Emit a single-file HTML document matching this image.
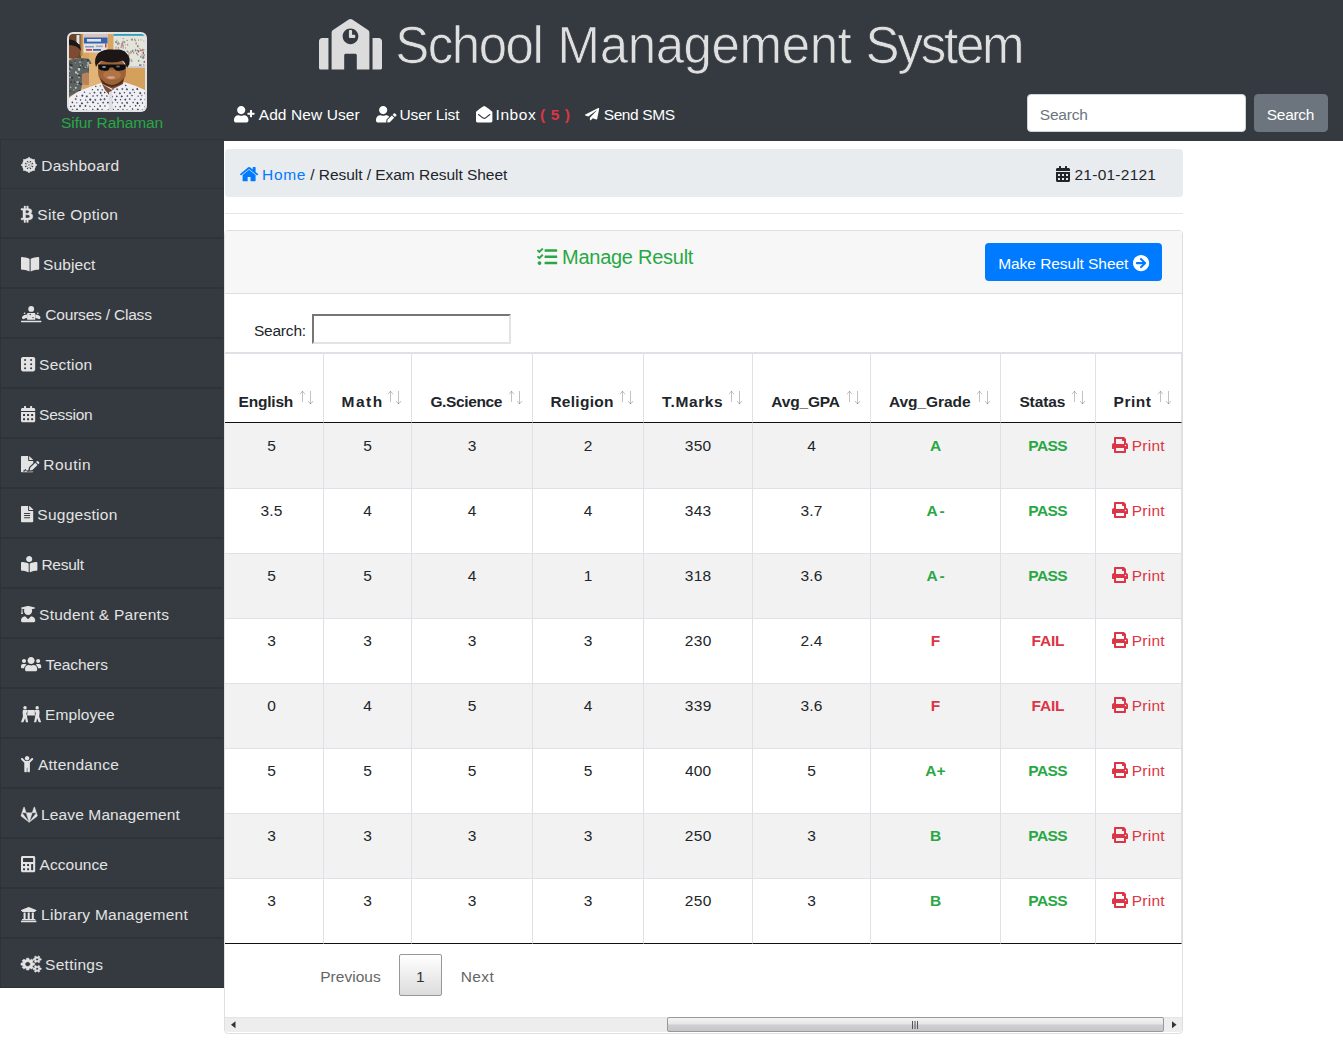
<!DOCTYPE html>
<html lang="en"><head><meta charset="utf-8"><title>School Management System</title>
<style>
html,body{margin:0;padding:0}
body{width:1343px;height:1044px;position:relative;overflow:hidden;background:#fff;font-family:"Liberation Sans",sans-serif;font-size:15.5px;color:#212529}
.t{position:absolute;white-space:nowrap;line-height:1;margin:0;font-weight:400}
svg.i{position:absolute;fill:currentColor;overflow:visible}
a{text-decoration:none;color:inherit}
#top{position:absolute;left:0;top:0;width:1343px;height:141px;background:#343a40;color:#fff}
#side{position:absolute;left:0;top:139px;width:224px;height:849px;background:#343a40;margin:0;padding:0;list-style:none;color:#e3e3e3}
#side li{position:absolute;left:0;width:222px;height:48px;border:1px solid #2e3338;border-right:0}
#side li:nth-child(2){border-top:0}
#avatar{position:absolute;left:67px;top:32px;width:80px;height:80px;border-radius:6px;overflow:hidden;background:#e2e2e2}
#avatar svg{position:absolute;left:2px;top:2px;width:76px;height:76px;border-radius:4px}
#q{position:absolute;left:1027px;top:94px;width:219px;height:38px;box-sizing:border-box;border:1px solid #ced4da;border-radius:4px;background:#fff}
#qb{position:absolute;left:1254px;top:94px;width:73.5px;height:38px;box-sizing:border-box;border:1px solid #6c757d;border-radius:4px;background:#6c757d}
#crumb{position:absolute;left:225px;top:149px;width:958px;height:48px;background:#e9ecef;border-radius:4px}
#hr{position:absolute;left:225px;top:213px;width:958px;height:1px;background:#e6e6e6}
#card{position:absolute;left:224px;top:230px;width:957px;height:802px;border:1px solid #dfdfdf;border-radius:4px;background:#fff}
#chead{position:absolute;left:0;top:0;width:957px;height:62px;background:#f7f7f7;border-bottom:1px solid #dfdfdf;border-radius:3px 3px 0 0}
#mk{position:absolute;left:985px;top:243px;width:177px;height:38px;background:#007bff;border-radius:4px}
#sin{position:absolute;left:312px;top:314px;width:199px;height:29.5px;box-sizing:border-box;border:2px solid;border-color:#767676 #e3e3e3 #e3e3e3 #767676;background:#fff}

#tbl{position:absolute;left:225px;top:352px;width:957px;border-collapse:separate;border-spacing:0;table-layout:fixed}
#tbl th,#tbl td{position:relative;padding:0;box-sizing:border-box;border-right:1px solid #dee2e6;text-align:center;font-weight:400}
#tbl th{height:71px;border-top:2px solid #dee2e6;border-bottom:1px solid #111}
#tbl td{height:65px;border-bottom:1px solid #dee2e6;vertical-align:top;line-height:1}
#tbl tr:first-child td{height:66px}
#tbl tr.o td{background:#f2f2f2}
#tbl tr:last-child td{border-bottom-color:#111}
#tbl td span.v{display:inline-block;margin-top:14px}
#tbl tr:first-child td span.v{margin-top:15px}
#tbl td:first-child{padding-right:5px}
#tbl .g{color:#28a745;font-weight:700}
#tbl .r{color:#dc3545;font-weight:700}
#tbl .ar{opacity:.28}
#tbl td a{color:#dc3545}
.pg{color:#666}
#p1{position:absolute;left:399px;top:954px;width:42.5px;height:42px;box-sizing:border-box;border:1px solid #979797;border-radius:2px;background:linear-gradient(to bottom,#fff 0%,#dcdcdc 100%)}
#sb{position:absolute;left:225px;top:1017px;width:957px;height:15px;background:#ededed;border-top:1px solid #e4e4e4;box-sizing:border-box;border-radius:0 0 3px 3px}
#sbt{position:absolute;left:442px;top:-1px;width:497px;height:15px;box-sizing:border-box;border:1px solid #999;border-radius:2px;background:linear-gradient(to bottom,#f4f4f4 0%,#e6e6e6 45%,#cfcfd2 55%,#c6c6ca 100%)}
</style></head><body>
<header id="top">
<div id="avatar"><svg viewBox="0 0 76 76" preserveAspectRatio="none"><defs><filter id="bl" x="-5%" y="-5%" width="110%" height="110%"><feGaussianBlur stdDeviation="0.55"/></filter><clipPath id="cp"><rect width="76" height="76" rx="3"/></clipPath></defs><g clip-path="url(#cp)"><g filter="url(#bl)"><rect x="-2" y="-2" width="80" height="80" fill="#d8a564"/><rect x="20" y="18" width="28" height="34" fill="#e0b070"/><rect x="56" y="33" width="22" height="25" fill="#d59f5c"/><rect x="-2" y="-2" width="14" height="26" fill="#6a452c"/><rect x="7.500" y="1" width="3" height="9" fill="#dfe6e6"/><rect x="11.500" y="-2" width="2" height="24" fill="#b98a4e"/><rect x="14.500" y="0" width="24" height="18.500" fill="#e6e3dc"/><rect x="14.500" y="0" width="24" height="4" fill="#d9c3bd"/><rect x="15" y="3.500" width="23.500" height="6" fill="#3563ae"/><rect x="18" y="5" width="14" height="2.600" fill="#dfe6f2"/><rect x="16" y="12" width="9" height="1.500" fill="#7f9cc9"/><rect x="27" y="11.500" width="7" height="1.600" fill="#9aa9c4"/><rect x="36" y="9.500" width="1.500" height="4" fill="#c2414c"/><rect x="17" y="15" width="6" height="1.800" fill="#c9464f"/><rect x="24" y="15" width="8" height="1.800" fill="#3f62a8"/><rect x="44.500" y="0" width="32" height="33.500" fill="#e3e4dc"/><rect x="44.500" y="0" width="32" height="1.800" fill="#2c9db8"/><rect x="55.4" y="7.2" width="0.7" height="2.1" fill="#7d8078"/><rect x="48.7" y="19.3" width="0.9" height="0.9" fill="#c7907a"/><rect x="58.1" y="9.7" width="1.1" height="2.1" fill="#c7907a"/><rect x="49.6" y="9.3" width="1.3" height="0.9" fill="#7d8078"/><rect x="63.0" y="4.4" width="0.7" height="2.2" fill="#b65a50"/><rect x="54.4" y="7.0" width="1.3" height="1.7" fill="#8b8f86"/><rect x="65.8" y="5.9" width="1.4" height="1.4" fill="#c7907a"/><rect x="61.9" y="4.8" width="1.3" height="1.6" fill="#8b8f86"/><rect x="61.4" y="24.8" width="1.3" height="1.5" fill="#a9aca2"/><rect x="54.7" y="25.2" width="1.5" height="0.9" fill="#7d8078"/><rect x="54.7" y="16.9" width="1.5" height="1.3" fill="#6f8a96"/><rect x="74.4" y="6.3" width="0.8" height="1.3" fill="#a9aca2"/><rect x="73.1" y="14.8" width="0.7" height="1.7" fill="#7d8078"/><rect x="68.9" y="25.9" width="1.4" height="1.8" fill="#6f8a96"/><rect x="62.8" y="15.8" width="1.7" height="1.6" fill="#8b8f86"/><rect x="65.3" y="4.7" width="1.0" height="1.7" fill="#7d8078"/><rect x="65.8" y="15.5" width="1.1" height="1.9" fill="#7d8078"/><rect x="46.7" y="15.9" width="1.3" height="1.6" fill="#b65a50"/><rect x="52.3" y="11.0" width="0.9" height="1.4" fill="#7d8078"/><rect x="71.3" y="5.3" width="1.1" height="1.2" fill="#a9aca2"/><rect x="50.0" y="15.1" width="0.9" height="1.5" fill="#c7907a"/><rect x="56.4" y="27.8" width="0.8" height="1.1" fill="#b65a50"/><rect x="52.7" y="9.5" width="1.6" height="1.1" fill="#a9aca2"/><rect x="54.2" y="7.1" width="1.0" height="1.7" fill="#c7907a"/><rect x="73.6" y="22.3" width="1.7" height="1.8" fill="#c7907a"/><rect x="67.5" y="15.8" width="1.6" height="1.4" fill="#7d8078"/><rect x="57.6" y="5.9" width="1.1" height="1.1" fill="#7d8078"/><rect x="74.6" y="15.3" width="1.0" height="0.9" fill="#8b8f86"/><rect x="46.0" y="7.2" width="1.7" height="1.8" fill="#8b8f86"/><rect x="48.0" y="8.8" width="0.8" height="1.2" fill="#a9aca2"/><rect x="56.1" y="13.2" width="0.7" height="1.6" fill="#8b8f86"/><rect x="74.4" y="16.5" width="0.7" height="1.0" fill="#6f8a96"/><rect x="55.9" y="10.4" width="0.8" height="0.8" fill="#7d8078"/><rect x="73.6" y="17.8" width="1.4" height="2.3" fill="#b65a50"/><rect x="68.0" y="11.3" width="1.6" height="1.9" fill="#7d8078"/><rect x="53.6" y="13.3" width="1.0" height="1.2" fill="#b65a50"/><rect x="61.7" y="17.1" width="0.9" height="2.1" fill="#7d8078"/><rect x="74.6" y="26.9" width="1.6" height="2.0" fill="#b65a50"/><rect x="52.6" y="17.5" width="1.5" height="2.4" fill="#6f8a96"/><rect x="68.9" y="16.2" width="1.4" height="2.3" fill="#b65a50"/><rect x="59.0" y="29.2" width="1.7" height="1.4" fill="#6f8a96"/><rect x="52.4" y="9.4" width="1.0" height="1.6" fill="#b65a50"/><rect x="74.6" y="20.1" width="1.2" height="1.8" fill="#8b8f86"/><rect x="69.2" y="5.4" width="0.7" height="1.4" fill="#7d8078"/><rect x="66.6" y="8.6" width="1.1" height="1.8" fill="#b65a50"/><rect x="48.5" y="29.5" width="1.1" height="1.4" fill="#7d8078"/><rect x="73.5" y="23.3" width="1.8" height="0.8" fill="#b65a50"/><rect x="63.1" y="16.0" width="0.8" height="2.1" fill="#7d8078"/><rect x="74.4" y="21.4" width="0.8" height="1.7" fill="#6f8a96"/><rect x="46.6" y="25.4" width="1.4" height="1.6" fill="#7d8078"/><rect x="73.1" y="15.1" width="1.6" height="1.1" fill="#b65a50"/><rect x="53.3" y="11.2" width="1.5" height="1.3" fill="#b65a50"/><rect x="61.8" y="26.4" width="1.7" height="1.4" fill="#8b8f86"/><rect x="59.3" y="19.3" width="1.1" height="2.3" fill="#c7907a"/><rect x="60.5" y="17.9" width="1.2" height="2.2" fill="#c7907a"/><rect x="68.5" y="20.0" width="0.8" height="1.6" fill="#b65a50"/><rect x="67.0" y="18.6" width="1.4" height="1.6" fill="#6f8a96"/><rect x="60.0" y="24.7" width="0.7" height="1.1" fill="#c7907a"/><rect x="47.2" y="5.7" width="1.3" height="2.0" fill="#a9aca2"/><rect x="72.5" y="15.4" width="1.8" height="1.8" fill="#c7907a"/><rect x="51.8" y="10.8" width="1.2" height="1.6" fill="#c7907a"/><rect x="73.3" y="22.6" width="1.7" height="2.2" fill="#6f8a96"/><rect x="51.9" y="15.5" width="0.7" height="1.5" fill="#a9aca2"/><rect x="48.1" y="9.7" width="0.9" height="1.3" fill="#8b8f86"/><rect x="49.5" y="24.8" width="1.4" height="1.4" fill="#7d8078"/><rect x="53.3" y="6.8" width="0.9" height="2.3" fill="#a9aca2"/><rect x="57.5" y="16.6" width="1.6" height="1.1" fill="#7d8078"/><rect x="58.5" y="17.4" width="1.1" height="1.4" fill="#6f8a96"/><rect x="48.7" y="13.2" width="1.3" height="1.5" fill="#6f8a96"/><rect x="46.5" y="12.3" width="1.0" height="2.3" fill="#c7907a"/><rect x="49.3" y="28.7" width="1.8" height="1.0" fill="#b65a50"/><rect x="53.7" y="4.1" width="0.9" height="1.0" fill="#b65a50"/><rect x="58.2" y="28.5" width="1.1" height="1.7" fill="#6f8a96"/><rect x="60.9" y="16.8" width="0.7" height="0.9" fill="#6f8a96"/><rect x="66.0" y="14.9" width="0.9" height="0.8" fill="#8b8f86"/><rect x="48.6" y="10.3" width="1.6" height="0.9" fill="#c7907a"/><rect x="71.0" y="15.7" width="1.8" height="1.5" fill="#6f8a96"/><rect x="72.5" y="20.4" width="1.2" height="1.2" fill="#8b8f86"/><rect x="49.2" y="7.5" width="0.8" height="2.3" fill="#8b8f86"/><rect x="64.2" y="17.9" width="0.9" height="1.6" fill="#b65a50"/><rect x="51.2" y="12.7" width="1.8" height="0.9" fill="#8b8f86"/><rect x="46.5" y="17.2" width="1.2" height="1.2" fill="#b65a50"/><rect x="59.0" y="21.4" width="1.1" height="1.6" fill="#7d8078"/><rect x="70.2" y="14.0" width="1.0" height="1.1" fill="#c7907a"/><rect x="52.7" y="8.6" width="1.5" height="1.0" fill="#7d8078"/><rect x="74.7" y="30.5" width="0.6" height="1.8" fill="#b65a50"/><rect x="71.5" y="15.1" width="0.7" height="2.1" fill="#8b8f86"/><rect x="71.2" y="21.8" width="1.3" height="1.9" fill="#6f8a96"/><rect x="47.3" y="8.2" width="1.1" height="1.2" fill="#6f8a96"/><rect x="73.9" y="30.2" width="1.0" height="0.9" fill="#c7907a"/><rect x="44.500" y="32" width="32" height="1.500" fill="#c9ccd0"/><rect x="70" y="30.500" width="2.500" height="1.200" fill="#3b5fb0"/><ellipse cx="4" cy="16" rx="7" ry="9" fill="#7b4c33"/><path d="M-2 6 Q5 4 11 12 L12 17 Q8 10 -2 11z" fill="#1c1715"/><path d="M-2 27 Q8 22 20 25 Q24 30 23 38 L14 44 L12 56 L-2 64z" fill="#5d6263"/><rect x="18.4" y="32.4" width="0.8" height="1.4" fill="#c9cdcd"/><rect x="9.4" y="42.1" width="1.2" height="2.0" fill="#c9cdcd"/><rect x="1.0" y="52.8" width="1.4" height="0.9" fill="#c9cdcd"/><rect x="-0.5" y="35.3" width="0.9" height="2.2" fill="#c9cdcd"/><rect x="17.8" y="30.3" width="1.9" height="1.9" fill="#a9aeae"/><rect x="9.9" y="34.7" width="0.9" height="2.1" fill="#c9cdcd"/><rect x="2.1" y="42.8" width="2.0" height="1.7" fill="#2f3436"/><rect x="14.3" y="32.8" width="0.9" height="1.8" fill="#2f3436"/><rect x="20.1" y="37.8" width="1.6" height="1.7" fill="#a9aeae"/><rect x="12.8" y="48.1" width="1.2" height="1.5" fill="#a9aeae"/><rect x="0.5" y="56.7" width="1.8" height="0.9" fill="#2f3436"/><rect x="15.2" y="33.6" width="2.1" height="1.2" fill="#2f3436"/><rect x="15.6" y="32.8" width="1.5" height="1.4" fill="#a9aeae"/><rect x="9.5" y="48.2" width="1.7" height="1.8" fill="#2f3436"/><rect x="0.7" y="30.0" width="1.8" height="1.8" fill="#3c4244"/><rect x="12.7" y="29.5" width="0.9" height="1.2" fill="#a9aeae"/><rect x="13.8" y="48.5" width="1.2" height="1.6" fill="#a9aeae"/><rect x="9.2" y="40.9" width="2.3" height="1.6" fill="#2f3436"/><rect x="5.9" y="27.9" width="0.8" height="1.5" fill="#a9aeae"/><rect x="8.9" y="34.1" width="2.2" height="2.2" fill="#c9cdcd"/><rect x="0.6" y="28.1" width="2.2" height="1.0" fill="#3c4244"/><rect x="4.1" y="55.5" width="1.4" height="1.0" fill="#a9aeae"/><rect x="7.9" y="49.7" width="1.3" height="1.3" fill="#a9aeae"/><rect x="17.5" y="25.1" width="2.1" height="1.0" fill="#3c4244"/><rect x="18.8" y="34.9" width="0.9" height="1.4" fill="#3c4244"/><rect x="18.1" y="27.6" width="1.9" height="2.1" fill="#a9aeae"/><rect x="5.2" y="26.8" width="1.8" height="1.0" fill="#3c4244"/><rect x="20.4" y="39.8" width="1.1" height="1.4" fill="#3c4244"/><rect x="11.1" y="49.5" width="2.2" height="1.4" fill="#2f3436"/><rect x="12.5" y="29.7" width="1.5" height="2.2" fill="#3c4244"/><rect x="11.1" y="30.8" width="1.3" height="1.2" fill="#a9aeae"/><rect x="4.7" y="47.3" width="1.5" height="1.8" fill="#3c4244"/><rect x="1.6" y="46.9" width="1.1" height="2.2" fill="#2f3436"/><rect x="9.9" y="32.5" width="2.3" height="1.5" fill="#3c4244"/><rect x="2.1" y="31.5" width="1.1" height="1.6" fill="#2f3436"/><rect x="6.0" y="37.5" width="2.1" height="1.9" fill="#c9cdcd"/><rect x="8.1" y="39.1" width="1.4" height="1.3" fill="#c9cdcd"/><rect x="0.4" y="34.4" width="1.0" height="1.6" fill="#3c4244"/><rect x="12.9" y="54.3" width="0.9" height="2.1" fill="#c9cdcd"/><rect x="7.5" y="47.0" width="2.2" height="2.1" fill="#a9aeae"/><rect x="18.2" y="25.7" width="1.4" height="1.9" fill="#2f3436"/><rect x="9.8" y="27.5" width="2.3" height="1.2" fill="#a9aeae"/><rect x="1.4" y="30.2" width="2.2" height="1.9" fill="#2f3436"/><rect x="13.2" y="51.0" width="0.9" height="2.0" fill="#a9aeae"/><rect x="-1.0" y="29.3" width="1.8" height="1.3" fill="#2f3436"/><rect x="1.8" y="33.6" width="1.8" height="1.0" fill="#a9aeae"/><rect x="0.5" y="42.8" width="1.4" height="1.1" fill="#c9cdcd"/><rect x="12.2" y="25.4" width="2.3" height="1.2" fill="#3c4244"/><rect x="6.0" y="53.5" width="1.5" height="1.2" fill="#c9cdcd"/><rect x="4.4" y="57.7" width="0.9" height="1.1" fill="#3c4244"/><rect x="0.8" y="32.7" width="2.2" height="1.1" fill="#a9aeae"/><rect x="-0.2" y="36.5" width="1.3" height="1.4" fill="#a9aeae"/><rect x="-0.9" y="34.9" width="1.1" height="2.3" fill="#2f3436"/><rect x="5.9" y="52.9" width="1.5" height="1.2" fill="#c9cdcd"/><rect x="18.6" y="28.7" width="1.7" height="2.1" fill="#a9aeae"/><rect x="9.7" y="56.0" width="2.2" height="1.0" fill="#2f3436"/><path d="M13 40 Q19 37 22 40 L22 50 Q18 52 13 50z" fill="#b8835a"/><rect x="20" y="30" width="10" height="24" fill="#e3b478"/><path d="M-2 66 Q6 58 18 54 L32 49 L44 54 L55 48 Q66 51 78 57 L78 78 L-2 78z" fill="#f0eff4"/><path d="M26.8 51.5l0.9 1.0l-0.9 0.8l-0.8 -0.9z" fill="#2f3546"/><path d="M31.2 51.1l0.8 0.9l-0.8 0.7l-0.7 -0.8z" fill="#596078"/><path d="M56.7 50.4l1.0 1.1l-1.0 0.9l-0.9 -1.0z" fill="#454b5e"/><path d="M23.4 54.7l0.9 1.1l-0.9 0.8l-0.8 -0.9z" fill="#3a4152"/><path d="M28.9 54.8l1.0 1.1l-1.0 0.9l-0.9 -1.0z" fill="#2f3546"/><path d="M33.2 54.9l1.0 1.1l-1.0 0.8l-0.8 -1.0z" fill="#3a4152"/><path d="M38.8 54.1l1.0 1.1l-1.0 0.9l-0.9 -1.0z" fill="#2f3546"/><path d="M43.9 54.6l0.8 0.9l-0.8 0.7l-0.7 -0.8z" fill="#3a4152"/><path d="M48.1 53.9l1.3 1.5l-1.3 1.2l-1.2 -1.3z" fill="#596078"/><path d="M53.3 53.7l1.2 1.4l-1.2 1.1l-1.1 -1.2z" fill="#596078"/><path d="M57.9 54.0l1.2 1.4l-1.2 1.1l-1.1 -1.2z" fill="#3a4152"/><path d="M63.9 54.5l1.1 1.3l-1.1 1.0l-1.0 -1.1z" fill="#454b5e"/><path d="M68.2 53.8l1.2 1.4l-1.2 1.1l-1.1 -1.2z" fill="#2f3546"/><path d="M15.4 57.3l0.9 1.0l-0.9 0.8l-0.8 -0.9z" fill="#3a4152"/><path d="M20.9 58.4l0.9 1.0l-0.9 0.8l-0.8 -0.9z" fill="#596078"/><path d="M25.4 57.4l1.2 1.3l-1.2 1.1l-1.1 -1.2z" fill="#454b5e"/><path d="M31.6 57.6l1.2 1.4l-1.2 1.1l-1.1 -1.2z" fill="#3a4152"/><path d="M35.7 57.4l1.0 1.1l-1.0 0.9l-0.9 -1.0z" fill="#2f3546"/><path d="M41.4 57.4l0.9 1.0l-0.9 0.8l-0.8 -0.9z" fill="#454b5e"/><path d="M45.6 57.4l1.0 1.1l-1.0 0.9l-0.9 -1.0z" fill="#454b5e"/><path d="M50.8 58.1l1.2 1.3l-1.2 1.0l-1.0 -1.2z" fill="#454b5e"/><path d="M55.4 57.8l0.9 1.0l-0.9 0.8l-0.8 -0.9z" fill="#3a4152"/><path d="M61.0 57.7l1.3 1.4l-1.3 1.2l-1.2 -1.3z" fill="#596078"/><path d="M65.3 57.6l0.8 0.9l-0.8 0.7l-0.7 -0.8z" fill="#3a4152"/><path d="M71.2 57.7l1.3 1.5l-1.3 1.2l-1.2 -1.3z" fill="#454b5e"/><path d="M75.8 58.0l1.1 1.3l-1.1 1.0l-1.0 -1.1z" fill="#596078"/><path d="M7.7 61.3l0.9 1.0l-0.9 0.8l-0.8 -0.9z" fill="#2f3546"/><path d="M13.3 60.3l1.3 1.5l-1.3 1.2l-1.2 -1.3z" fill="#454b5e"/><path d="M17.8 61.1l1.2 1.4l-1.2 1.1l-1.1 -1.2z" fill="#454b5e"/><path d="M24.0 61.1l0.9 1.0l-0.9 0.8l-0.8 -0.9z" fill="#2f3546"/><path d="M28.2 60.6l1.1 1.2l-1.1 1.0l-1.0 -1.1z" fill="#596078"/><path d="M32.8 60.4l1.2 1.3l-1.2 1.0l-1.0 -1.2z" fill="#596078"/><path d="M37.9 61.1l1.0 1.1l-1.0 0.9l-0.9 -1.0z" fill="#454b5e"/><path d="M43.1 61.6l1.0 1.2l-1.0 0.9l-0.9 -1.0z" fill="#2f3546"/><path d="M47.8 61.3l1.0 1.1l-1.0 0.9l-0.9 -1.0z" fill="#2f3546"/><path d="M52.7 61.2l1.2 1.3l-1.2 1.0l-1.0 -1.2z" fill="#2f3546"/><path d="M58.3 60.9l1.0 1.2l-1.0 0.9l-0.9 -1.0z" fill="#3a4152"/><path d="M63.0 60.6l1.0 1.1l-1.0 0.9l-0.9 -1.0z" fill="#3a4152"/><path d="M69.1 61.2l0.9 1.0l-0.9 0.8l-0.8 -0.9z" fill="#454b5e"/><path d="M72.8 60.8l0.9 1.0l-0.9 0.8l-0.8 -0.9z" fill="#596078"/><path d="M78.7 61.1l0.9 1.0l-0.9 0.8l-0.8 -0.9z" fill="#454b5e"/><path d="M6.7 63.8l1.2 1.4l-1.2 1.1l-1.1 -1.2z" fill="#596078"/><path d="M11.5 65.0l0.9 1.0l-0.9 0.8l-0.8 -0.9z" fill="#2f3546"/><path d="M16.7 65.1l1.0 1.1l-1.0 0.9l-0.9 -1.0z" fill="#596078"/><path d="M21.2 64.3l1.3 1.4l-1.3 1.2l-1.2 -1.3z" fill="#3a4152"/><path d="M26.2 64.7l1.2 1.3l-1.2 1.0l-1.0 -1.2z" fill="#454b5e"/><path d="M31.6 64.3l1.3 1.4l-1.3 1.1l-1.1 -1.3z" fill="#454b5e"/><path d="M35.5 63.8l1.3 1.5l-1.3 1.2l-1.2 -1.3z" fill="#596078"/><path d="M40.5 64.4l0.9 1.0l-0.9 0.8l-0.8 -0.9z" fill="#454b5e"/><path d="M46.4 64.6l1.3 1.4l-1.3 1.1l-1.1 -1.3z" fill="#3a4152"/><path d="M51.5 64.8l0.9 1.0l-0.9 0.8l-0.8 -0.9z" fill="#2f3546"/><path d="M56.2 64.4l1.2 1.3l-1.2 1.0l-1.0 -1.2z" fill="#2f3546"/><path d="M60.7 64.0l1.2 1.3l-1.2 1.0l-1.0 -1.2z" fill="#596078"/><path d="M65.9 64.6l0.8 0.9l-0.8 0.7l-0.7 -0.8z" fill="#3a4152"/><path d="M71.8 64.2l1.2 1.4l-1.2 1.1l-1.1 -1.2z" fill="#596078"/><path d="M76.4 64.2l1.2 1.4l-1.2 1.1l-1.1 -1.2z" fill="#454b5e"/><path d="M3.3 67.3l1.0 1.2l-1.0 0.9l-0.9 -1.0z" fill="#2f3546"/><path d="M7.8 68.0l0.8 0.9l-0.8 0.7l-0.7 -0.8z" fill="#3a4152"/><path d="M12.9 68.1l1.2 1.4l-1.2 1.1l-1.1 -1.2z" fill="#2f3546"/><path d="M18.5 67.2l1.2 1.3l-1.2 1.0l-1.0 -1.2z" fill="#596078"/><path d="M24.0 66.9l1.3 1.5l-1.3 1.2l-1.2 -1.3z" fill="#3a4152"/><path d="M28.9 68.4l0.9 1.0l-0.9 0.8l-0.8 -0.9z" fill="#454b5e"/><path d="M34.1 67.4l1.2 1.3l-1.2 1.0l-1.0 -1.2z" fill="#454b5e"/><path d="M38.9 67.4l1.1 1.3l-1.1 1.0l-1.0 -1.1z" fill="#2f3546"/><path d="M43.1 67.3l1.3 1.4l-1.3 1.2l-1.2 -1.3z" fill="#2f3546"/><path d="M48.4 67.7l0.9 1.0l-0.9 0.8l-0.8 -0.9z" fill="#596078"/><path d="M53.1 67.9l1.0 1.1l-1.0 0.9l-0.9 -1.0z" fill="#2f3546"/><path d="M58.0 67.6l1.2 1.3l-1.2 1.0l-1.0 -1.2z" fill="#2f3546"/><path d="M64.1 67.6l0.9 1.0l-0.9 0.8l-0.8 -0.9z" fill="#2f3546"/><path d="M68.5 67.7l1.3 1.5l-1.3 1.2l-1.2 -1.3z" fill="#2f3546"/><path d="M73.4 68.0l0.9 1.1l-0.9 0.8l-0.8 -0.9z" fill="#3a4152"/><path d="M78.6 68.4l1.0 1.1l-1.0 0.8l-0.8 -1.0z" fill="#2f3546"/><path d="M1.8 71.4l1.0 1.1l-1.0 0.9l-0.9 -1.0z" fill="#2f3546"/><path d="M5.3 71.0l1.0 1.1l-1.0 0.9l-0.9 -1.0z" fill="#3a4152"/><path d="M11.0 70.8l1.2 1.3l-1.2 1.1l-1.1 -1.2z" fill="#2f3546"/><path d="M16.4 70.8l1.1 1.3l-1.1 1.0l-1.0 -1.1z" fill="#2f3546"/><path d="M20.9 71.4l0.9 1.0l-0.9 0.8l-0.8 -0.9z" fill="#3a4152"/><path d="M25.6 71.7l0.8 0.9l-0.8 0.7l-0.7 -0.8z" fill="#3a4152"/><path d="M31.1 70.9l1.1 1.2l-1.1 1.0l-1.0 -1.1z" fill="#2f3546"/><path d="M35.9 71.1l0.9 1.0l-0.9 0.8l-0.8 -0.9z" fill="#454b5e"/><path d="M41.2 71.5l0.8 0.9l-0.8 0.7l-0.7 -0.8z" fill="#454b5e"/><path d="M46.5 71.7l0.9 1.0l-0.9 0.8l-0.8 -0.9z" fill="#596078"/><path d="M51.2 71.7l1.0 1.1l-1.0 0.9l-0.9 -1.0z" fill="#2f3546"/><path d="M55.6 70.6l1.1 1.3l-1.1 1.0l-1.0 -1.1z" fill="#2f3546"/><path d="M61.1 71.5l0.9 1.0l-0.9 0.8l-0.8 -0.9z" fill="#596078"/><path d="M66.6 70.7l1.0 1.1l-1.0 0.9l-0.9 -1.0z" fill="#3a4152"/><path d="M70.6 71.0l0.8 0.9l-0.8 0.7l-0.7 -0.8z" fill="#3a4152"/><path d="M76.1 71.8l1.0 1.1l-1.0 0.9l-0.9 -1.0z" fill="#454b5e"/><path d="M3.5 74.6l1.2 1.4l-1.2 1.1l-1.1 -1.2z" fill="#596078"/><path d="M8.0 74.3l1.1 1.3l-1.1 1.0l-1.0 -1.1z" fill="#2f3546"/><path d="M14.3 74.7l1.2 1.3l-1.2 1.1l-1.1 -1.2z" fill="#596078"/><path d="M17.7 75.3l0.9 0.9l-0.9 0.8l-0.8 -0.9z" fill="#596078"/><path d="M23.7 74.4l1.0 1.1l-1.0 0.8l-0.8 -1.0z" fill="#3a4152"/><path d="M28.7 74.0l1.2 1.3l-1.2 1.1l-1.1 -1.2z" fill="#2f3546"/><path d="M33.1 74.6l1.2 1.3l-1.2 1.0l-1.0 -1.2z" fill="#596078"/><path d="M39.2 75.1l1.2 1.3l-1.2 1.0l-1.0 -1.2z" fill="#2f3546"/><path d="M44.2 74.5l0.9 1.0l-0.9 0.8l-0.8 -0.9z" fill="#3a4152"/><path d="M49.1 74.7l1.3 1.5l-1.3 1.2l-1.2 -1.3z" fill="#454b5e"/><path d="M53.9 74.5l1.0 1.1l-1.0 0.9l-0.9 -1.0z" fill="#596078"/><path d="M58.1 75.1l1.1 1.2l-1.1 0.9l-0.9 -1.1z" fill="#596078"/><path d="M63.5 74.0l1.0 1.2l-1.0 0.9l-0.9 -1.0z" fill="#3a4152"/><path d="M68.9 74.5l1.2 1.4l-1.2 1.1l-1.1 -1.2z" fill="#2f3546"/><path d="M73.3 74.9l0.9 1.0l-0.9 0.8l-0.8 -0.9z" fill="#454b5e"/><path d="M77.7 74.2l1.0 1.1l-1.0 0.9l-0.9 -1.0z" fill="#454b5e"/><path d="M0.4 77.7l0.9 1.0l-0.9 0.8l-0.8 -0.9z" fill="#3a4152"/><path d="M6.2 77.3l1.2 1.3l-1.2 1.1l-1.1 -1.2z" fill="#3a4152"/><path d="M10.3 78.3l0.9 1.0l-0.9 0.8l-0.8 -0.9z" fill="#2f3546"/><path d="M16.7 77.8l1.3 1.4l-1.3 1.1l-1.1 -1.3z" fill="#3a4152"/><path d="M21.4 78.5l0.9 1.0l-0.9 0.8l-0.8 -0.9z" fill="#596078"/><path d="M25.5 77.3l1.3 1.5l-1.3 1.2l-1.2 -1.3z" fill="#3a4152"/><path d="M31.7 78.1l1.3 1.4l-1.3 1.1l-1.1 -1.3z" fill="#3a4152"/><path d="M36.2 78.0l0.9 1.0l-0.9 0.8l-0.8 -0.9z" fill="#3a4152"/><path d="M41.5 78.3l1.0 1.1l-1.0 0.9l-0.9 -1.0z" fill="#2f3546"/><path d="M45.9 77.2l1.3 1.5l-1.3 1.2l-1.2 -1.3z" fill="#2f3546"/><path d="M50.3 78.2l1.2 1.4l-1.2 1.1l-1.1 -1.2z" fill="#2f3546"/><path d="M56.2 77.9l1.1 1.3l-1.1 1.0l-1.0 -1.1z" fill="#2f3546"/><path d="M60.2 77.9l1.1 1.2l-1.1 1.0l-1.0 -1.1z" fill="#596078"/><path d="M65.4 77.9l1.1 1.2l-1.1 1.0l-1.0 -1.1z" fill="#3a4152"/><path d="M70.5 78.4l1.1 1.2l-1.1 1.0l-1.0 -1.1z" fill="#3a4152"/><path d="M75.7 78.1l1.0 1.1l-1.0 0.9l-0.9 -1.0z" fill="#454b5e"/><path d="M33 50 L43 56 L41 62 L36 56z" fill="#7a5036"/><path d="M40 58 L43 57 L44 78 L40 78z" fill="#dcdde6"/><path d="M32 44 L55 44 L54 50 L44 55 L33 50z" fill="#7d4b2c"/><ellipse cx="43" cy="37.500" rx="14" ry="15.500" fill="#9c6238"/><ellipse cx="43" cy="41" rx="9" ry="5" fill="#b07446"/><ellipse cx="42" cy="43.600" rx="4" ry="1.400" fill="#dba08c"/><path d="M31 44 Q43 58 55 44 Q54 52 43 53 Q33 52 31 44z" fill="#4d2f1e"/><path d="M27 33 Q24 24 30 19 Q36 14 44 16 Q54 14 59 21 Q63 27 58 34 Q56 26 50 25 Q40 23 32 27 Q29 29 27 33z" fill="#1b1816"/><ellipse cx="43" cy="22" rx="15" ry="6.500" fill="#1b1816"/><path d="M29 30.500 L57 30.500 L56.500 35 Q53 37.500 47 36.500 L44 33.500 L41 33.500 L39 36.500 Q33 37.500 29.500 35z" fill="#0c0c0e"/><ellipse cx="35" cy="33" rx="2" ry="1" fill="#8a93a8"/><ellipse cx="49" cy="32.500" rx="2" ry="1" fill="#6a6474"/></g></g></svg></div>
<a class="t" style="left:61.10px;top:115px;font-size:15.5px;letter-spacing:-0.108px;color:#28a745;">Sifur Rahaman</a><svg class="i" style="left:319.00px;top:18.50px;width:63.00px;height:50.50px;color:#dcdcdc;" viewBox="0 -0 640 512" preserveAspectRatio="none"><path d="M0 224v272c0 8.8 7.200 16 16 16h80V192H32c-17.700 0-32 14.300-32 32zM608 192h-64v320h80c8.800 0 16-7.200 16-16V224c0-17.700-14.300-32-32-32zM497.750 112.040L337.750 5.370a32 32 0 0 0-35.500 0l-160 106.670A32 32 0 0 0 128 138.660V512h128V368c0-8.800 7.200-16 16-16h96c8.800 0 16 7.200 16 16v144h128V138.670c0-10.700-5.350-20.700-14.250-26.630zM320 256c-44.180 0-80-35.820-80-80s35.820-80 80-80 80 35.820 80 80-35.820 80-80 80zm40-96h-24v-40c0-4.420-3.580-8-8-8h-16c-4.420 0-8 3.580-8 8v64c0 4.420 3.580 8 8 8h48c4.420 0 8-3.580 8-8v-16c0-4.420-3.580-8-8-8z"/></svg><h1 class="t" style="left:0;top:0;color:#dfdfdf"><span class="t" style="left:395.20px;top:20px;font-size:51px;letter-spacing:-1.480px;-webkit-text-stroke:0.7px #343a40;">School</span> <span class="t" style="left:557.60px;top:20px;font-size:51px;letter-spacing:-0.389px;-webkit-text-stroke:0.7px #343a40;">Management</span> <span class="t" style="left:865.60px;top:20px;font-size:51px;letter-spacing:-2.220px;-webkit-text-stroke:0.7px #343a40;">System</span></h1>
<nav><svg class="i" style="left:233.60px;top:105.70px;width:20.60px;height:16.40px;" viewBox="0 0 640 512" preserveAspectRatio="none"><path d="M624 208h-64v-64c0-8.800-7.200-16-16-16h-32c-8.800 0-16 7.200-16 16v64h-64c-8.800 0-16 7.200-16 16v32c0 8.800 7.200 16 16 16h64v64c0 8.800 7.200 16 16 16h32c8.800 0 16-7.200 16-16v-64h64c8.800 0 16-7.200 16-16v-32c0-8.800-7.200-16-16-16zm-400 48c70.700 0 128-57.300 128-128S294.700 0 224 0 96 57.300 96 128s57.300 128 128 128zm89.600 32h-16.700c-22.200 10.200-46.900 16-72.900 16s-50.600-5.800-72.900-16h-16.700C60.200 288 0 348.200 0 422.400V464c0 26.500 21.500 48 48 48h352c26.500 0 48-21.500 48-48v-41.600c0-74.200-60.200-134.400-134.400-134.400z"/></svg><a class="t" style="left:258.70px;top:107px;font-size:15.5px;letter-spacing:0.100px;">Add New User</a><svg class="i" style="left:375.50px;top:105.70px;width:20.50px;height:16.40px;" viewBox="0 0 639.97 512.01" preserveAspectRatio="none"><path d="M224 256c70.700 0 128-57.300 128-128S294.700 0 224 0 96 57.300 96 128s57.300 128 128 128zm89.600 32h-16.700c-22.200 10.200-46.900 16-72.900 16s-50.600-5.800-72.900-16h-16.700C60.200 288 0 348.200 0 422.400V464c0 26.500 21.500 48 48 48h274.900c-2.400-6.800-3.400-14-2.600-21.300l6.800-60.900 1.200-11.100 7.900-7.900 77.300-77.300c-24.500-27.700-60-45.500-99.900-45.500zm45.300 145.300l-6.800 61c-1.100 10.200 7.500 18.800 17.600 17.600l60.900-6.800 137.900-137.900-71.700-71.700-137.900 137.800zM633 268.900L595.100 231c-9.300-9.300-24.500-9.300-33.800 0l-37.800 37.800-4.100 4.100 71.800 71.700 41.800-41.800c9.300-9.400 9.300-24.500 0-33.900z"/></svg><a class="t" style="left:399.50px;top:107px;font-size:15.5px;letter-spacing:-0.150px;">User List</a><svg class="i" style="left:475.50px;top:105.70px;width:16.40px;height:16.40px;" viewBox="0 -1536 1792 1792" preserveAspectRatio="none"><path transform="scale(1,-1)" d="M1792 882v-978q0 -66 -47 -113t-113 -47h-1472q-66 0 -113 47t-47 113v978q0 15 11 24q8 7 39 34.5t41.5 36t45.5 37.5t70 55.5t96 73t143.5 107t192.5 140.5q5 4 52.5 40t71.5 52.5t64 35t69 18.5t69 -18.5t65 -35.5t71 -52t52 -40q110 -80 192.5 -140.5t143.5 -107 t96 -73t70 -55.5t45.5 -37.5t41.5 -36t39 -34.5q11 -9 11 -24zM1228 297q263 191 345 252q11 8 12.5 20.5t-6.5 23.5l-38 52q-8 11 -21 12.5t-24 -6.5q-231 -169 -343 -250q-5 -3 -52 -39t-71.5 -52.5t-64.5 -35t-69 -18.5t-69 18.5t-64.5 35t-71.5 52.5t-52 39 q-186 134 -343 250q-11 8 -24 6.5t-21 -12.5l-38 -52q-8 -11 -6.5 -23.5t12.5 -20.5q82 -61 345 -252q10 -8 50 -38t65 -47t64 -39.5t77.5 -33.5t75.5 -11t75.5 11t79 34.5t64.5 39.5t65 47.5t48 36.5z"/></svg><a class="t" style="left:495.60px;top:107px;font-size:15.5px;letter-spacing:0.550px;">Inbox</a><b class="t" style="left:540.10px;top:107px;font-size:15.5px;letter-spacing:0.575px;font-weight:700;color:#dc3545;">( 5 )</b><svg class="i" style="left:585.30px;top:107.80px;width:14.20px;height:12.30px;" viewBox="0.01 -0.03 511.95 512.1" preserveAspectRatio="none"><path d="M476 3.200L12.500 270.600c-18.100 10.400-15.800 35.600 2.200 43.200L121 358.400l287.300-253.200c5.500-4.900 13.300 2.600 8.600 8.300L176 407v80.500c0 23.600 28.500 32.900 42.500 15.800L282 426l124.600 52.200c14.200 6 30.400-2.900 33-18.200l72-432C515 7.800 493.300-6.800 476 3.200z"/></svg><a class="t" style="left:603.70px;top:107px;font-size:15.5px;letter-spacing:-0.400px;">Send SMS</a></nav>
<div id="q"><span class="t" style="left:11.80px;top:12px;font-size:15.5px;letter-spacing:-0.200px;color:#6c757d;">Search</span></div><div id="qb"><span class="t" style="left:11.80px;top:12px;font-size:15.5px;letter-spacing:-0.300px;color:#fff;">Search</span></div></header>
<ul id="side">
<li style="top:0px"><svg class="i" style="left:19.80px;top:17.20px;width:16.00px;height:16.00px;" viewBox="-2 -2 516 516" preserveAspectRatio="none"><circle cx="256" cy="256" r="182" fill="none" stroke="currentColor" stroke-width="84"/><circle cx="256" cy="256" r="48" fill="none" stroke="currentColor" stroke-width="52"/><line x1="326.0" y1="256.0" x2="426.0" y2="256.0" stroke="currentColor" stroke-width="54"/><circle cx="484.0" cy="256.0" r="30"/><line x1="305.5" y1="305.5" x2="376.2" y2="376.2" stroke="currentColor" stroke-width="54"/><circle cx="417.2" cy="417.2" r="30"/><line x1="256.0" y1="326.0" x2="256.0" y2="426.0" stroke="currentColor" stroke-width="54"/><circle cx="256.0" cy="484.0" r="30"/><line x1="206.5" y1="305.5" x2="135.8" y2="376.2" stroke="currentColor" stroke-width="54"/><circle cx="94.8" cy="417.2" r="30"/><line x1="186.0" y1="256.0" x2="86.0" y2="256.0" stroke="currentColor" stroke-width="54"/><circle cx="28.0" cy="256.0" r="30"/><line x1="206.5" y1="206.5" x2="135.8" y2="135.8" stroke="currentColor" stroke-width="54"/><circle cx="94.8" cy="94.8" r="30"/><line x1="256.0" y1="186.0" x2="256.0" y2="86.0" stroke="currentColor" stroke-width="54"/><circle cx="256.0" cy="28.0" r="30"/><line x1="305.5" y1="206.5" x2="376.2" y2="135.8" stroke="currentColor" stroke-width="54"/><circle cx="417.2" cy="94.8" r="30"/></svg><a class="t" style="left:40.20px;top:18px;font-size:15.5px;letter-spacing:0.263px;">Dashboard</a></li>
<li style="top:50px"><svg class="i" style="left:19.80px;top:17.00px;width:11.80px;height:16.40px;stroke:currentColor;stroke-width:40;" viewBox="56 -1408 1202.38 1664" preserveAspectRatio="none"><path transform="scale(1,-1)" d="M1167 896q18 -182 -131 -258q117 -28 175 -103t45 -214q-7 -71 -32.5 -125t-64.5 -89t-97 -58.5t-121.5 -34.5t-145.5 -15v-255h-154v251q-80 0 -122 1v-252h-154v255q-18 0 -54 0.5t-55 0.5h-200l31 183h111q50 0 58 51v402h16q-6 1 -16 1v287q-13 68 -89 68h-111v164 l212 -1q64 0 97 1v252h154v-247q82 2 122 2v245h154v-252q79 -7 140 -22.5t113 -45t82.5 -78t36.5 -114.5zM952 351q0 36 -15 64t-37 46t-57.5 30.5t-65.5 18.5t-74 9t-69 3t-64.5 -1t-47.5 -1v-338q8 0 37 -0.5t48 -0.5t53 1.5t58.5 4t57 8.5t55.5 14t47.5 21t39.5 30 t24.5 40t9.5 51zM881 827q0 33 -12.5 58.5t-30.5 42t-48 28t-55 16.5t-61.5 8t-58 2.5t-54 -1t-39.5 -0.5v-307q5 0 34.5 -0.5t46.5 0t50 2t55 5.5t51.5 11t48.5 18.5t37 27t27 38.5t9 51z"/></svg><a class="t" style="left:36.30px;top:18px;font-size:15.5px;letter-spacing:0.380px;">Site Option</a></li>
<li style="top:99px"><svg class="i" style="left:19.80px;top:18.00px;width:18.20px;height:14.40px;" viewBox="0 32 575.99 448" preserveAspectRatio="none"><path d="M542.220 32.050c-54.800 3.110-163.720 14.430-230.960 55.590-4.640 2.840-7.270 7.890-7.270 13.170v363.870c0 11.550 12.630 18.850 23.280 13.490 69.180-34.820 169.230-44.320 218.700-46.920 16.890-.890 30.020-14.430 30.020-30.660V62.750c.010-17.710-15.350-31.740-33.770-30.700zM264.730 87.640C197.500 46.480 88.580 35.170 33.780 32.050 15.360 31.010 0 45.040 0 62.750V400.600c0 16.240 13.130 29.780 30.020 30.660 49.490 2.600 149.590 12.110 218.770 46.950 10.620 5.350 23.210-1.940 23.210-13.460V100.630c0-5.290-2.620-10.140-7.270-12.990z"/></svg><a class="t" style="left:42.00px;top:18px;font-size:15.5px;letter-spacing:0.100px;">Subject</a></li>
<li style="top:149px"><svg class="i" style="left:19.80px;top:17.10px;width:20.40px;height:16.20px;" viewBox="0 4 640 508" preserveAspectRatio="none"><circle cx="320" cy="96" r="92"/><path d="M224 224h192c18 0 32 14 32 32v176H192V256c0-18 14-32 32-32z"/><path d="M40 330c30-40 90-62 150-62v110c-50 4-90 18-120 40-40-16-50-60-30-88zM600 330c-30-40-90-62-150-62v110c50 4 90 18 120 40 40-16 50-60 30-88z"/><circle cx="112" cy="232" r="26"/><circle cx="528" cy="232" r="26"/><rect x="0" y="464" width="640" height="48" rx="14"/><circle cx="290" cy="272" r="22" fill="#343a40"/><circle cx="376" cy="368" r="22" fill="#343a40"/></svg><a class="t" style="left:44.30px;top:18px;font-size:15.5px;letter-spacing:-0.200px;">Courses / Class</a></li>
<li style="top:199px"><svg class="i" style="left:19.80px;top:18.00px;width:14.20px;height:14.40px;" viewBox="0 32 448 448" preserveAspectRatio="none"><path fill-rule="evenodd" d="M384 32H64C28.650 32 0 60.650 0 96v320c0 35.350 28.650 64 64 64h320c35.350 0 64-28.650 64-64V96c0-35.350-28.650-64-64-64zM128 416a32 32 0 1 1 0-64 32 32 0 0 1 0 64zm0-128a32 32 0 1 1 0-64 32 32 0 0 1 0 64zm0-128a32 32 0 1 1 0-64 32 32 0 0 1 0 64zm192 256a32 32 0 1 1 0-64 32 32 0 0 1 0 64zm0-128a32 32 0 1 1 0-64 32 32 0 0 1 0 64zm0-128a32 32 0 1 1 0-64 32 32 0 0 1 0 64z"/></svg><a class="t" style="left:38.10px;top:18px;font-size:15.5px;letter-spacing:0.217px;">Section</a></li>
<li style="top:249px"><svg class="i" style="left:19.80px;top:17.10px;width:14.20px;height:16.20px;" viewBox="0 0 448 512" preserveAspectRatio="none"><path d="M0 464c0 26.500 21.500 48 48 48h352c26.500 0 48-21.500 48-48V192H0v272zm320-196c0-6.600 5.400-12 12-12h40c6.600 0 12 5.400 12 12v40c0 6.600-5.400 12-12 12h-40c-6.600 0-12-5.400-12-12v-40zm0 128c0-6.600 5.400-12 12-12h40c6.600 0 12 5.400 12 12v40c0 6.600-5.400 12-12 12h-40c-6.600 0-12-5.400-12-12v-40zM192 268c0-6.600 5.400-12 12-12h40c6.600 0 12 5.400 12 12v40c0 6.600-5.400 12-12 12h-40c-6.600 0-12-5.400-12-12v-40zm0 128c0-6.600 5.400-12 12-12h40c6.600 0 12 5.400 12 12v40c0 6.600-5.400 12-12 12h-40c-6.600 0-12-5.400-12-12v-40zM64 268c0-6.600 5.400-12 12-12h40c6.600 0 12 5.400 12 12v40c0 6.600-5.400 12-12 12H76c-6.600 0-12-5.400-12-12v-40zm0 128c0-6.600 5.400-12 12-12h40c6.600 0 12 5.400 12 12v40c0 6.600-5.400 12-12 12H76c-6.600 0-12-5.400-12-12v-40zM400 64h-48V16c0-8.800-7.200-16-16-16h-32c-8.800 0-16 7.200-16 16v48H160V16c0-8.800-7.200-16-16-16h-32c-8.800 0-16 7.200-16 16v48H48C21.500 64 0 85.500 0 112v48h448v-48c0-26.500-21.500-48-48-48z"/></svg><a class="t" style="left:38.10px;top:18px;font-size:15.5px;letter-spacing:-0.250px;">Session</a></li>
<li style="top:299px"><svg class="i" style="left:19.80px;top:17.10px;width:18.40px;height:16.20px;" viewBox="0 0 573.5 512" preserveAspectRatio="none"><path d="M24 0h200v136c0 13.300 10.700 24 24 24h136v64L250 358l-20 96-60 8c-8-22-18-50-34-50-12 0-22 30-40 50H64v32h48c22 0 34-26 42-40 10 26 22 42 44 42l186-2v-6 0c0 13.300-10.700 24-24 24H24c-13.300 0-24-10.700-24-24V24C0 10.700 10.700 0 24 0z"/><path d="M256 0l128 128H256z"/><path d="M286 374l-14 84 84-14 160-160-70-70zM566 234l-28 28-70-70 28-28c10-10 26-10 36 0l34 34c10 10 10 26 0 36z"/></svg><a class="t" style="left:42.20px;top:18px;font-size:15.5px;letter-spacing:0.540px;">Routin</a></li>
<li style="top:349px"><svg class="i" style="left:19.80px;top:17.10px;width:12.20px;height:16.20px;" viewBox="0 0 384 512" preserveAspectRatio="none"><path d="M224 136V0H24C10.700 0 0 10.700 0 24v464c0 13.300 10.700 24 24 24h336c13.300 0 24-10.700 24-24V160H248c-13.200 0-24-10.800-24-24zm64 236c0 6.600-5.400 12-12 12H108c-6.600 0-12-5.400-12-12v-8c0-6.600 5.400-12 12-12h168c6.600 0 12 5.400 12 12v8zm0-64c0 6.600-5.400 12-12 12H108c-6.600 0-12-5.400-12-12v-8c0-6.600 5.400-12 12-12h168c6.600 0 12 5.400 12 12v8zm0-72v8c0 6.600-5.400 12-12 12H108c-6.600 0-12-5.400-12-12v-8c0-6.600 5.400-12 12-12h168c6.600 0 12 5.400 12 12zm96-114.100v6.100H256V0h6.100c6.400 0 12.500 2.500 17 7l97.900 98c4.500 4.500 7 10.600 7 16.900z"/></svg><a class="t" style="left:36.30px;top:18px;font-size:15.5px;letter-spacing:0.278px;">Suggestion</a></li>
<li style="top:399px"><svg class="i" style="left:19.80px;top:17.10px;width:16.40px;height:16.20px;" viewBox="0 0 512.01 512" preserveAspectRatio="none"><path d="M352 96c0-53.020-42.980-96-96-96s-96 42.980-96 96 42.980 96 96 96 96-42.980 96-96zM233.590 241.100c-59.330-36.320-155.430-46.300-203.790-49.050C13.550 191.130 0 203.510 0 219.140v222.800c0 14.330 11.590 26.280 26.490 27.050 43.660 2.290 131.990 10.680 193.040 41.430 9.370 4.720 20.480-1.710 20.480-11.870V252.560c-.010-4.670-2.320-8.950-6.420-11.460zm248.610-49.050c-48.350 2.740-144.460 12.730-203.780 49.050-4.100 2.510-6.410 6.960-6.410 11.630v245.790c0 10.190 11.140 16.630 20.540 11.900 61.040-30.720 149.320-39.110 192.970-41.400 14.900-.78 26.490-12.730 26.490-27.060V219.140c-.010-15.630-13.560-28.010-29.810-27.090z"/></svg><a class="t" style="left:40.40px;top:18px;font-size:15.5px;letter-spacing:-0.240px;">Result</a></li>
<li style="top:449px"><svg class="i" style="left:19.80px;top:17.10px;width:14.20px;height:16.20px;" viewBox="0 -0.02 448 512.03" preserveAspectRatio="none"><path d="M319.400 320.600L224 416l-95.400-95.400C57.100 323.700 0 382.200 0 454.400v9.600c0 26.500 21.500 48 48 48h352c26.500 0 48-21.500 48-48v-9.600c0-72.200-57.100-130.700-128.600-133.800zM13.600 79.800l6.400 1.500v58.400c-7 4.200-12 11.500-12 20.300 0 8.400 4.600 15.400 11.100 19.700L3.500 242c-1.700 6.900 2.100 14 7.600 14h41.800c5.500 0 9.300-7.100 7.600-14l-15.600-62.300C51.400 175.400 56 168.400 56 160c0-8.800-5-16.100-12-20.300V87.100l66 15.900c-8.600 17.200-14 36.400-14 57 0 70.700 57.300 128 128 128s128-57.300 128-128c0-20.600-5.300-39.800-14-57l96.300-23.200c18.200-4.400 18.200-27.100 0-31.500l-190.400-46c-13-3.100-26.700-3.100-39.700 0L13.600 48.200c-18.100 4.400-18.100 27.200 0 31.600z"/></svg><a class="t" style="left:38.10px;top:18px;font-size:15.5px;letter-spacing:0.250px;">Student &amp; Parents</a></li>
<li style="top:499px"><svg class="i" style="left:19.80px;top:18.10px;width:20.20px;height:14.20px;" viewBox="0 32 640 448" preserveAspectRatio="none"><path d="M96 224c35.300 0 64-28.700 64-64s-28.700-64-64-64-64 28.700-64 64 28.700 64 64 64zm448 0c35.300 0 64-28.700 64-64s-28.700-64-64-64-64 28.700-64 64 28.700 64 64 64zm32 32h-64c-17.600 0-33.500 7.100-45.100 18.600 40.300 22.100 68.900 62 75.100 109.400h66c17.700 0 32-14.300 32-32v-32c0-35.300-28.700-64-64-64zm-256 0c61.900 0 112-50.100 112-112S381.900 32 320 32 208 82.100 208 144s50.100 112 112 112zm76.800 32h-8.300c-20.800 10-43.900 16-68.500 16s-47.600-6-68.500-16h-8.300C179.600 288 128 339.600 128 403.200V432c0 26.500 21.500 48 48 48h288c26.500 0 48-21.500 48-48v-28.800c0-63.600-51.600-115.200-115.200-115.200zm-223.700-13.400C161.500 263.100 145.600 256 128 256H64c-35.300 0-64 28.700-64 64v32c0 17.700 14.300 32 32 32h65.900c6.300-47.400 34.900-87.300 75.200-109.400z"/></svg><a class="t" style="left:44.60px;top:18px;font-size:15.5px;letter-spacing:-0.086px;">Teachers</a></li>
<li style="top:549px"><svg class="i" style="left:19.80px;top:17.10px;width:20.20px;height:16.20px;" viewBox="14 0 612 512" preserveAspectRatio="none"><circle cx="136" cy="52" r="52"/><circle cx="504" cy="52" r="52"/><rect x="206" y="128" width="228" height="176" rx="12"/><path d="M92 116H170Q200 116 208 146L236 236L214 306L192 262L196 332L232 512H164L138 384L86 512H14L74 332L62 204Q60 116 92 116Z"/><path d="M92 116H170Q200 116 208 146L236 236L214 306L192 262L196 332L232 512H164L138 384L86 512H14L74 332L62 204Q60 116 92 116Z" transform="translate(640,0) scale(-1,1)"/><path d="M206 150l-34 110 34 20zM434 150l34 110-34 20z" fill="#343a40"/></svg><a class="t" style="left:44.00px;top:18px;font-size:15.5px;letter-spacing:0.100px;">Employee</a></li>
<li style="top:599px"><svg class="i" style="left:19.80px;top:17.10px;width:12.20px;height:16.20px;" viewBox="0 0 384 512" preserveAspectRatio="none"><path d="M120 72c0-39.765 32.235-72 72-72s72 32.235 72 72c0 39.764-32.235 72-72 72s-72-32.236-72-72zm254.627 1.373c-12.496-12.497-32.758-12.497-45.254 0L242.745 160H141.254L54.627 73.373c-12.496-12.497-32.758-12.497-45.254 0-12.497 12.497-12.497 32.758 0 45.255L104 213.254V480c0 17.673 14.327 32 32 32h16c17.673 0 32-14.327 32-32V368h16v112c0 17.673 14.327 32 32 32h16c17.673 0 32-14.327 32-32V213.254l94.627-94.627c12.497-12.497 12.497-32.757 0-45.254z"/></svg><a class="t" style="left:36.90px;top:18px;font-size:15.5px;letter-spacing:0.278px;">Attendance</a></li>
<li style="top:649px"><svg class="i" style="left:19.80px;top:17.60px;width:16.40px;height:15.20px;stroke:currentColor;stroke-width:14;" viewBox="-0.04 18.23 512.04 475.48" preserveAspectRatio="none"><path d="M105.200 24.900c-3.100-8.900-15.700-8.900-18.900 0L29.800 199.700h132c-.100 0-56.600-174.800-56.600-174.800zM.900 287.700c-2.600 8 .300 16.900 7.100 22l247.900 184-226.200-294zm160.800-88l94.300 294 94.300-294zm349.400 88l-28.800-88-226.300 294 247.900-184c6.900-5.100 9.700-14 7.200-22zM425.700 24.900c-3.100-8.900-15.700-8.900-18.900 0l-56.600 174.800h132z"/></svg><a class="t" style="left:40.10px;top:18px;font-size:15.5px;letter-spacing:0.120px;">Leave Management</a></li>
<li style="top:699px"><svg class="i" style="left:19.80px;top:17.10px;width:14.20px;height:16.20px;" viewBox="0 0 448 512" preserveAspectRatio="none"><path d="M400 0H48C22.400 0 0 22.400 0 48v416c0 25.600 22.400 48 48 48h352c25.600 0 48-22.400 48-48V48c0-25.600-22.400-48-48-48zM128 435.200c0 6.400-6.400 12.800-12.800 12.800H76.800c-6.400 0-12.800-6.400-12.800-12.800v-38.400c0-6.400 6.400-12.800 12.800-12.800h38.400c6.400 0 12.800 6.400 12.800 12.800v38.400zm0-128c0 6.400-6.400 12.800-12.800 12.800H76.800c-6.400 0-12.800-6.400-12.800-12.800v-38.400c0-6.400 6.400-12.800 12.800-12.800h38.400c6.400 0 12.800 6.400 12.800 12.800v38.400zm128 128c0 6.400-6.400 12.800-12.800 12.800h-38.400c-6.400 0-12.800-6.400-12.800-12.800v-38.400c0-6.400 6.400-12.800 12.800-12.800h38.400c6.400 0 12.800 6.400 12.800 12.800v38.400zm0-128c0 6.400-6.400 12.800-12.800 12.800h-38.400c-6.400 0-12.800-6.400-12.800-12.800v-38.400c0-6.400 6.400-12.800 12.800-12.800h38.400c6.400 0 12.800 6.400 12.800 12.800v38.400zm128 128c0 6.400-6.400 12.800-12.800 12.800h-38.400c-6.400 0-12.800-6.400-12.800-12.800V268.800c0-6.400 6.400-12.800 12.800-12.800h38.400c6.400 0 12.800 6.400 12.800 12.800v166.400zm0-256c0 6.400-6.400 12.800-12.800 12.800H76.800c-6.400 0-12.800-6.400-12.800-12.800V76.800C64 70.400 70.400 64 76.800 64h294.400c6.400 0 12.800 6.400 12.800 12.800v102.400z"/></svg><a class="t" style="left:38.60px;top:18px;font-size:15.5px;letter-spacing:0.029px;">Accounce</a></li>
<li style="top:749px"><svg class="i" style="left:19.80px;top:17.60px;width:15.40px;height:15.20px;" viewBox="16 32 480 448" preserveAspectRatio="none"><path d="M496 128v16a8 8 0 0 1-8 8h-24v12c0 6.627-5.373 12-12 12H60c-6.627 0-12-5.373-12-12v-12H24a8 8 0 0 1-8-8v-16a8 8 0 0 1 4.941-7.392l232-88a7.996 7.996 0 0 1 6.118 0l232 88A8 8 0 0 1 496 128zm-24 304H40c-13.255 0-24 10.745-24 24v16a8 8 0 0 0 8 8h464a8 8 0 0 0 8-8v-16c0-13.255-10.745-24-24-24zM96 192v192H60c-6.627 0-12 5.373-12 12v20h416v-20c0-6.627-5.373-12-12-12h-36V192h-64v192h-64V192h-64v192h-64V192H96z"/></svg><a class="t" style="left:40.10px;top:18px;font-size:15.5px;letter-spacing:0.265px;">Library Management</a></li>
<li style="top:799px"><svg class="i" style="left:19.80px;top:17.10px;width:20.20px;height:16.20px;stroke:currentColor;stroke-width:60;" viewBox="0 -1520 1920 1761" preserveAspectRatio="none"><path transform="scale(1,-1)" d="M896 640q0 106 -75 181t-181 75t-181 -75t-75 -181t75 -181t181 -75t181 75t75 181zM1664 128q0 52 -38 90t-90 38t-90 -38t-38 -90q0 -53 37.5 -90.5t90.5 -37.5t90.5 37.5t37.5 90.5zM1664 1152q0 52 -38 90t-90 38t-90 -38t-38 -90q0 -53 37.5 -90.5t90.5 -37.5 t90.5 37.5t37.5 90.5zM1280 731v-185q0 -10 -7 -19.5t-16 -10.5l-155 -24q-11 -35 -32 -76q34 -48 90 -115q7 -11 7 -20q0 -12 -7 -19q-23 -30 -82.5 -89.5t-78.5 -59.5q-11 0 -21 7l-115 90q-37 -19 -77 -31q-11 -108 -23 -155q-7 -24 -30 -24h-186q-11 0 -20 7.5t-10 17.5 l-23 153q-34 10 -75 31l-118 -89q-7 -7 -20 -7q-11 0 -21 8q-144 133 -144 160q0 9 7 19q10 14 41 53t47 61q-23 44 -35 82l-152 24q-10 1 -17 9.5t-7 19.5v185q0 10 7 19.5t16 10.5l155 24q11 35 32 76q-34 48 -90 115q-7 11 -7 20q0 12 7 20q22 30 82 89t79 59q11 0 21 -7 l115 -90q34 18 77 32q11 108 23 154q7 24 30 24h186q11 0 20 -7.5t10 -17.5l23 -153q34 -10 75 -31l118 89q8 7 20 7q11 0 21 -8q144 -133 144 -160q0 -8 -7 -19q-12 -16 -42 -54t-45 -60q23 -48 34 -82l152 -23q10 -2 17 -10.5t7 -19.5zM1920 198v-140q0 -16 -149 -31 q-12 -27 -30 -52q51 -113 51 -138q0 -4 -4 -7q-122 -71 -124 -71q-8 0 -46 47t-52 68q-20 -2 -30 -2t-30 2q-14 -21 -52 -68t-46 -47q-2 0 -124 71q-4 3 -4 7q0 25 51 138q-18 25 -30 52q-149 15 -149 31v140q0 16 149 31q13 29 30 52q-51 113 -51 138q0 4 4 7q4 2 35 20 t59 34t30 16q8 0 46 -46.5t52 -67.5q20 2 30 2t30 -2q51 71 92 112l6 2q4 0 124 -70q4 -3 4 -7q0 -25 -51 -138q17 -23 30 -52q149 -15 149 -31zM1920 1222v-140q0 -16 -149 -31q-12 -27 -30 -52q51 -113 51 -138q0 -4 -4 -7q-122 -71 -124 -71q-8 0 -46 47t-52 68 q-20 -2 -30 -2t-30 2q-14 -21 -52 -68t-46 -47q-2 0 -124 71q-4 3 -4 7q0 25 51 138q-18 25 -30 52q-149 15 -149 31v140q0 16 149 31q13 29 30 52q-51 113 -51 138q0 4 4 7q4 2 35 20t59 34t30 16q8 0 46 -46.5t52 -67.5q20 2 30 2t30 -2q51 71 92 112l6 2q4 0 124 -70 q4 -3 4 -7q0 -25 -51 -138q17 -23 30 -52q149 -15 149 -31z"/></svg><a class="t" style="left:44.10px;top:18px;font-size:15.5px;letter-spacing:0.257px;">Settings</a></li>
</ul>
<main>
<div id="crumb"><svg class="i" style="left:14.80px;top:17.80px;width:18.20px;height:14.20px;color:#007bff;" viewBox="25.8889 -1283 1612.22 1283" preserveAspectRatio="none"><path transform="scale(1,-1)" d="M1408 544v-480q0 -26 -19 -45t-45 -19h-384v384h-256v-384h-384q-26 0 -45 19t-19 45v480q0 1 0.5 3t0.5 3l575 474l575 -474q1 -2 1 -6zM1631 613l-62 -74q-8 -9 -21 -11h-3q-13 0 -21 7l-692 577l-692 -577q-12 -8 -24 -7q-13 2 -21 11l-62 74q-8 10 -7 23.5t11 21.5 l719 599q32 26 76 26t76 -26l244 -204v195q0 14 9 23t23 9h192q14 0 23 -9t9 -23v-408l219 -182q10 -8 11 -21.5t-7 -23.5z"/></svg><a class="t" style="left:37.00px;top:18px;font-size:15.5px;letter-spacing:0.700px;color:#007bff;">Home</a><span class="t" style="left:85.20px;top:18px;font-size:15.5px;letter-spacing:-0.037px;">/ Result / Exam Result Sheet</span><svg class="i" style="left:831.00px;top:17.00px;width:14.00px;height:16.00px;" viewBox="0 0 448 512" preserveAspectRatio="none"><path d="M0 464c0 26.500 21.500 48 48 48h352c26.500 0 48-21.500 48-48V192H0v272zm320-196c0-6.600 5.400-12 12-12h40c6.600 0 12 5.400 12 12v40c0 6.600-5.400 12-12 12h-40c-6.600 0-12-5.400-12-12v-40zm0 128c0-6.600 5.400-12 12-12h40c6.600 0 12 5.400 12 12v40c0 6.600-5.400 12-12 12h-40c-6.600 0-12-5.400-12-12v-40zM192 268c0-6.600 5.400-12 12-12h40c6.600 0 12 5.400 12 12v40c0 6.600-5.400 12-12 12h-40c-6.600 0-12-5.400-12-12v-40zm0 128c0-6.600 5.400-12 12-12h40c6.600 0 12 5.400 12 12v40c0 6.600-5.400 12-12 12h-40c-6.600 0-12-5.400-12-12v-40zM64 268c0-6.600 5.400-12 12-12h40c6.600 0 12 5.400 12 12v40c0 6.600-5.400 12-12 12H76c-6.600 0-12-5.400-12-12v-40zm0 128c0-6.600 5.400-12 12-12h40c6.600 0 12 5.400 12 12v40c0 6.600-5.400 12-12 12H76c-6.600 0-12-5.400-12-12v-40zM400 64h-48V16c0-8.800-7.200-16-16-16h-32c-8.800 0-16 7.200-16 16v48H160V16c0-8.800-7.200-16-16-16h-32c-8.800 0-16 7.200-16 16v48H48C21.500 64 0 85.500 0 112v48h448v-48c0-26.500-21.500-48-48-48z"/></svg><span class="t" style="left:849.50px;top:18px;font-size:15.5px;letter-spacing:0.244px;">21-01-2121</span></div>
<div id="hr"></div>
<section id="card"><div id="chead"><svg class="i" style="left:312.00px;top:17.20px;width:20.20px;height:16.90px;color:#28a745;" viewBox="0 31.97 512 432.03" preserveAspectRatio="none"><path d="M139.610 35.500a12 12 0 0 0-17 0L58.930 98.810l-22.700-22.120a12 12 0 0 0-17 0L3.530 92.410a12 12 0 0 0 0 17l47.590 47.400a12.780 12.780 0 0 0 17.610 0l15.590-15.620L156.520 69a12.090 12.090 0 0 0 .090-17zm0 159.190a12 12 0 0 0-17 0l-63.680 63.720-22.700-22.100a12 12 0 0 0-17 0L3.530 252a12 12 0 0 0 0 17L51 316.500a12.770 12.770 0 0 0 17.600 0l15.700-15.690 72.200-72.220a12 12 0 0 0 .090-16.900zM64 368c-26.490 0-48.590 21.500-48.590 48S37.530 464 64 464a48 48 0 0 0 0-96zm432 16H208a16 16 0 0 0-16 16v32a16 16 0 0 0 16 16h288a16 16 0 0 0 16-16v-32a16 16 0 0 0-16-16zm0-320H208a16 16 0 0 0-16 16v32a16 16 0 0 0 16 16h288a16 16 0 0 0 16-16V80a16 16 0 0 0-16-16zm0 160H208a16 16 0 0 0-16 16v32a16 16 0 0 0 16 16h288a16 16 0 0 0 16-16v-32a16 16 0 0 0-16-16z"/></svg><h5 class="t" style="left:337.00px;top:16px;font-size:20px;letter-spacing:-0.258px;color:#28a745;">Manage Result</h5></div></section>
<a id="mk"><span class="t" style="left:13.20px;top:13px;font-size:15.5px;letter-spacing:-0.050px;color:#fff;">Make Result Sheet</span><svg class="i" style="left:148.00px;top:12.00px;width:16.20px;height:16.20px;color:#fff;" viewBox="8 8 496 496" preserveAspectRatio="none"><path d="M256 8c137 0 248 111 248 248S393 504 256 504 8 393 8 256 119 8 256 8zm-28.900 143.600l75.500 72.400H120c-13.300 0-24 10.700-24 24v16c0 13.300 10.700 24 24 24h182.600l-75.500 72.400c-9.700 9.300-9.900 24.800-.4 34.300l11 10.900c9.400 9.400 24.600 9.400 33.900 0L404.300 273c9.400-9.400 9.400-24.600 0-33.900L271.600 106.300c-9.400-9.400-24.600-9.400-33.900 0l-11 10.900c-9.500 9.600-9.300 25.100.4 34.400z"/></svg></a>
<label class="t" style="left:253.90px;top:323px;font-size:15.5px;letter-spacing:-0.200px;">Search:</label><div id="sin"></div>
<table id="tbl"><colgroup><col style="width:99px"><col style="width:88px"><col style="width:121px"><col style="width:111px"><col style="width:109px"><col style="width:118px"><col style="width:130px"><col style="width:95px"><col style="width:86px"></colgroup>
<thead><tr><th><span class="t" style="left:13.60px;top:40px;font-size:15.5px;letter-spacing:-0.217px;font-weight:700;">English</span><svg class="i ar" style="left:75.1px;top:35px;width:16px;height:18px" viewBox="0 0 16 18"><path d="M2.500 2.300V13M0 5.200L2.500 2.200L5 5.200M10.500 2V15M8 12L10.500 15L13 12" fill="none" stroke="#212529" stroke-width="1"/></svg></th><th><span class="t" style="left:17.50px;top:40px;font-size:15.5px;letter-spacing:1.500px;font-weight:700;">Math</span><svg class="i ar" style="left:64.1px;top:35px;width:16px;height:18px" viewBox="0 0 16 18"><path d="M2.500 2.300V13M0 5.200L2.500 2.200L5 5.200M10.500 2V15M8 12L10.500 15L13 12" fill="none" stroke="#212529" stroke-width="1"/></svg></th><th><span class="t" style="left:18.40px;top:40px;font-size:15.5px;letter-spacing:-0.375px;font-weight:700;">G.Science</span><svg class="i ar" style="left:97.1px;top:35px;width:16px;height:18px" viewBox="0 0 16 18"><path d="M2.500 2.300V13M0 5.200L2.500 2.200L5 5.200M10.500 2V15M8 12L10.500 15L13 12" fill="none" stroke="#212529" stroke-width="1"/></svg></th><th><span class="t" style="left:17.40px;top:40px;font-size:15.5px;letter-spacing:0.271px;font-weight:700;">Religion</span><svg class="i ar" style="left:87.1px;top:35px;width:16px;height:18px" viewBox="0 0 16 18"><path d="M2.500 2.300V13M0 5.200L2.500 2.200L5 5.200M10.500 2V15M8 12L10.500 15L13 12" fill="none" stroke="#212529" stroke-width="1"/></svg></th><th><span class="t" style="left:18.10px;top:40px;font-size:15.5px;letter-spacing:0.617px;font-weight:700;">T.Marks</span><svg class="i ar" style="left:85.1px;top:35px;width:16px;height:18px" viewBox="0 0 16 18"><path d="M2.500 2.300V13M0 5.200L2.500 2.200L5 5.200M10.500 2V15M8 12L10.500 15L13 12" fill="none" stroke="#212529" stroke-width="1"/></svg></th><th><span class="t" style="left:18.20px;top:40px;font-size:15.5px;letter-spacing:-0.150px;font-weight:700;">Avg_GPA</span><svg class="i ar" style="left:94.1px;top:35px;width:16px;height:18px" viewBox="0 0 16 18"><path d="M2.500 2.300V13M0 5.200L2.500 2.200L5 5.200M10.500 2V15M8 12L10.500 15L13 12" fill="none" stroke="#212529" stroke-width="1"/></svg></th><th><span class="t" style="left:17.90px;top:40px;font-size:15.5px;letter-spacing:-0.063px;font-weight:700;">Avg_Grade</span><svg class="i ar" style="left:106.1px;top:35px;width:16px;height:18px" viewBox="0 0 16 18"><path d="M2.500 2.300V13M0 5.200L2.500 2.200L5 5.200M10.500 2V15M8 12L10.500 15L13 12" fill="none" stroke="#212529" stroke-width="1"/></svg></th><th><span class="t" style="left:18.40px;top:40px;font-size:15.5px;letter-spacing:-0.120px;font-weight:700;">Statas</span><svg class="i ar" style="left:71.1px;top:35px;width:16px;height:18px" viewBox="0 0 16 18"><path d="M2.500 2.300V13M0 5.200L2.500 2.200L5 5.200M10.500 2V15M8 12L10.500 15L13 12" fill="none" stroke="#212529" stroke-width="1"/></svg></th><th><span class="t" style="left:17.60px;top:40px;font-size:15.5px;letter-spacing:0.500px;font-weight:700;">Print</span><svg class="i ar" style="left:62.1px;top:35px;width:16px;height:18px" viewBox="0 0 16 18"><path d="M2.500 2.300V13M0 5.200L2.500 2.200L5 5.200M10.500 2V15M8 12L10.500 15L13 12" fill="none" stroke="#212529" stroke-width="1"/></svg></th></tr></thead>
<tbody>
<tr class="o"><td><span class="v">5</span></td><td><span class="v">5</span></td><td><span class="v">3</span></td><td><span class="v">2</span></td><td><span class="v" style="letter-spacing:0.25px;margin-right:-0.25px">350</span></td><td><span class="v">4</span></td><td><span class="v g">A</span></td><td><span class="v g" style="letter-spacing:-0.57px;margin-right:0.57px">PASS</span></td><td><a><svg class="i" style="left:16.00px;top:14.00px;width:16.00px;height:16.00px;color:#dc3545;" viewBox="0 0 512 512" preserveAspectRatio="none"><path d="M448 192V77.250c0-8.490-3.370-16.620-9.370-22.630L393.370 9.370c-6-6-14.140-9.370-22.630-9.370H96C78.330 0 64 14.330 64 32v160c-35.350 0-64 28.650-64 64v112c0 8.840 7.160 16 16 16h48v96c0 17.670 14.330 32 32 32h320c17.670 0 32-14.330 32-32v-96h48c8.840 0 16-7.160 16-16V256c0-35.350-28.650-64-64-64zm-64 256H128v-96h256v96zm0-224H128V64h192v48c0 8.840 7.160 16 16 16h48v96zm48 72c-13.250 0-24-10.750-24-24 0-13.260 10.750-24 24-24s24 10.740 24 24c0 13.250-10.750 24-24 24z"/></svg><span class="t" style="left:35.70px;top:15px;font-size:15.5px;letter-spacing:0.275px;color:#dc3545;">Print</span></a></td></tr>
<tr class="e"><td><span class="v" style="letter-spacing:0.10px;margin-right:-0.10px">3.5</span></td><td><span class="v">4</span></td><td><span class="v">4</span></td><td><span class="v">4</span></td><td><span class="v" style="letter-spacing:0.30px;margin-right:-0.30px">343</span></td><td><span class="v" style="letter-spacing:0.15px;margin-right:-0.15px">3.7</span></td><td><span class="v g" style="letter-spacing:1.80px;margin-right:-1.80px">A-</span></td><td><span class="v g" style="letter-spacing:-0.57px;margin-right:0.57px">PASS</span></td><td><a><svg class="i" style="left:16.00px;top:13.00px;width:16.00px;height:16.00px;color:#dc3545;" viewBox="0 0 512 512" preserveAspectRatio="none"><path d="M448 192V77.250c0-8.490-3.370-16.620-9.370-22.630L393.370 9.370c-6-6-14.140-9.370-22.630-9.370H96C78.330 0 64 14.330 64 32v160c-35.350 0-64 28.650-64 64v112c0 8.840 7.160 16 16 16h48v96c0 17.670 14.330 32 32 32h320c17.670 0 32-14.330 32-32v-96h48c8.840 0 16-7.160 16-16V256c0-35.350-28.650-64-64-64zm-64 256H128v-96h256v96zm0-224H128V64h192v48c0 8.840 7.160 16 16 16h48v96zm48 72c-13.250 0-24-10.750-24-24 0-13.260 10.750-24 24-24s24 10.740 24 24c0 13.250-10.750 24-24 24z"/></svg><span class="t" style="left:35.70px;top:14px;font-size:15.5px;letter-spacing:0.275px;color:#dc3545;">Print</span></a></td></tr>
<tr class="o"><td><span class="v">5</span></td><td><span class="v">5</span></td><td><span class="v">4</span></td><td><span class="v">1</span></td><td><span class="v" style="letter-spacing:0.30px;margin-right:-0.30px">318</span></td><td><span class="v" style="letter-spacing:0.10px;margin-right:-0.10px">3.6</span></td><td><span class="v g" style="letter-spacing:1.80px;margin-right:-1.80px">A-</span></td><td><span class="v g" style="letter-spacing:-0.57px;margin-right:0.57px">PASS</span></td><td><a><svg class="i" style="left:16.00px;top:13.00px;width:16.00px;height:16.00px;color:#dc3545;" viewBox="0 0 512 512" preserveAspectRatio="none"><path d="M448 192V77.250c0-8.490-3.370-16.620-9.370-22.630L393.370 9.370c-6-6-14.140-9.370-22.630-9.370H96C78.330 0 64 14.330 64 32v160c-35.350 0-64 28.650-64 64v112c0 8.840 7.160 16 16 16h48v96c0 17.670 14.330 32 32 32h320c17.670 0 32-14.330 32-32v-96h48c8.840 0 16-7.160 16-16V256c0-35.350-28.650-64-64-64zm-64 256H128v-96h256v96zm0-224H128V64h192v48c0 8.840 7.160 16 16 16h48v96zm48 72c-13.250 0-24-10.750-24-24 0-13.260 10.750-24 24-24s24 10.740 24 24c0 13.250-10.750 24-24 24z"/></svg><span class="t" style="left:35.70px;top:14px;font-size:15.5px;letter-spacing:0.275px;color:#dc3545;">Print</span></a></td></tr>
<tr class="e"><td><span class="v">3</span></td><td><span class="v">3</span></td><td><span class="v">3</span></td><td><span class="v">3</span></td><td><span class="v" style="letter-spacing:0.35px;margin-right:-0.35px">230</span></td><td><span class="v" style="letter-spacing:0.10px;margin-right:-0.10px">2.4</span></td><td><span class="v r">F</span></td><td><span class="v r" style="letter-spacing:-0.27px;margin-right:0.27px">FAIL</span></td><td><a><svg class="i" style="left:16.00px;top:13.00px;width:16.00px;height:16.00px;color:#dc3545;" viewBox="0 0 512 512" preserveAspectRatio="none"><path d="M448 192V77.250c0-8.490-3.370-16.620-9.370-22.630L393.370 9.370c-6-6-14.140-9.370-22.630-9.370H96C78.330 0 64 14.330 64 32v160c-35.350 0-64 28.650-64 64v112c0 8.840 7.160 16 16 16h48v96c0 17.670 14.330 32 32 32h320c17.670 0 32-14.330 32-32v-96h48c8.840 0 16-7.160 16-16V256c0-35.350-28.650-64-64-64zm-64 256H128v-96h256v96zm0-224H128V64h192v48c0 8.840 7.160 16 16 16h48v96zm48 72c-13.250 0-24-10.750-24-24 0-13.260 10.750-24 24-24s24 10.740 24 24c0 13.250-10.750 24-24 24z"/></svg><span class="t" style="left:35.70px;top:14px;font-size:15.5px;letter-spacing:0.275px;color:#dc3545;">Print</span></a></td></tr>
<tr class="o"><td><span class="v">0</span></td><td><span class="v">4</span></td><td><span class="v">5</span></td><td><span class="v">4</span></td><td><span class="v" style="letter-spacing:0.35px;margin-right:-0.35px">339</span></td><td><span class="v" style="letter-spacing:0.10px;margin-right:-0.10px">3.6</span></td><td><span class="v r">F</span></td><td><span class="v r" style="letter-spacing:-0.27px;margin-right:0.27px">FAIL</span></td><td><a><svg class="i" style="left:16.00px;top:13.00px;width:16.00px;height:16.00px;color:#dc3545;" viewBox="0 0 512 512" preserveAspectRatio="none"><path d="M448 192V77.250c0-8.490-3.370-16.620-9.370-22.630L393.370 9.370c-6-6-14.140-9.370-22.630-9.370H96C78.330 0 64 14.330 64 32v160c-35.350 0-64 28.650-64 64v112c0 8.840 7.160 16 16 16h48v96c0 17.670 14.330 32 32 32h320c17.670 0 32-14.330 32-32v-96h48c8.840 0 16-7.160 16-16V256c0-35.350-28.650-64-64-64zm-64 256H128v-96h256v96zm0-224H128V64h192v48c0 8.840 7.160 16 16 16h48v96zm48 72c-13.250 0-24-10.750-24-24 0-13.260 10.750-24 24-24s24 10.740 24 24c0 13.250-10.750 24-24 24z"/></svg><span class="t" style="left:35.70px;top:14px;font-size:15.5px;letter-spacing:0.275px;color:#dc3545;">Print</span></a></td></tr>
<tr class="e"><td><span class="v">5</span></td><td><span class="v">5</span></td><td><span class="v">5</span></td><td><span class="v">5</span></td><td><span class="v" style="letter-spacing:0.15px;margin-right:-0.15px">400</span></td><td><span class="v">5</span></td><td><span class="v g" style="letter-spacing:0.10px;margin-right:-0.10px">A+</span></td><td><span class="v g" style="letter-spacing:-0.57px;margin-right:0.57px">PASS</span></td><td><a><svg class="i" style="left:16.00px;top:13.00px;width:16.00px;height:16.00px;color:#dc3545;" viewBox="0 0 512 512" preserveAspectRatio="none"><path d="M448 192V77.250c0-8.490-3.370-16.620-9.370-22.630L393.370 9.370c-6-6-14.140-9.370-22.630-9.370H96C78.330 0 64 14.330 64 32v160c-35.350 0-64 28.650-64 64v112c0 8.840 7.160 16 16 16h48v96c0 17.670 14.330 32 32 32h320c17.670 0 32-14.330 32-32v-96h48c8.840 0 16-7.160 16-16V256c0-35.350-28.650-64-64-64zm-64 256H128v-96h256v96zm0-224H128V64h192v48c0 8.840 7.160 16 16 16h48v96zm48 72c-13.250 0-24-10.750-24-24 0-13.260 10.750-24 24-24s24 10.740 24 24c0 13.250-10.750 24-24 24z"/></svg><span class="t" style="left:35.70px;top:14px;font-size:15.5px;letter-spacing:0.275px;color:#dc3545;">Print</span></a></td></tr>
<tr class="o"><td><span class="v">3</span></td><td><span class="v">3</span></td><td><span class="v">3</span></td><td><span class="v">3</span></td><td><span class="v" style="letter-spacing:0.35px;margin-right:-0.35px">250</span></td><td><span class="v">3</span></td><td><span class="v g">B</span></td><td><span class="v g" style="letter-spacing:-0.57px;margin-right:0.57px">PASS</span></td><td><a><svg class="i" style="left:16.00px;top:13.00px;width:16.00px;height:16.00px;color:#dc3545;" viewBox="0 0 512 512" preserveAspectRatio="none"><path d="M448 192V77.250c0-8.490-3.370-16.620-9.370-22.630L393.370 9.370c-6-6-14.140-9.370-22.630-9.370H96C78.330 0 64 14.330 64 32v160c-35.350 0-64 28.650-64 64v112c0 8.840 7.160 16 16 16h48v96c0 17.670 14.330 32 32 32h320c17.670 0 32-14.330 32-32v-96h48c8.840 0 16-7.160 16-16V256c0-35.350-28.650-64-64-64zm-64 256H128v-96h256v96zm0-224H128V64h192v48c0 8.840 7.160 16 16 16h48v96zm48 72c-13.250 0-24-10.750-24-24 0-13.260 10.750-24 24-24s24 10.740 24 24c0 13.250-10.750 24-24 24z"/></svg><span class="t" style="left:35.70px;top:14px;font-size:15.5px;letter-spacing:0.275px;color:#dc3545;">Print</span></a></td></tr>
<tr class="e"><td><span class="v">3</span></td><td><span class="v">3</span></td><td><span class="v">3</span></td><td><span class="v">3</span></td><td><span class="v" style="letter-spacing:0.35px;margin-right:-0.35px">250</span></td><td><span class="v">3</span></td><td><span class="v g">B</span></td><td><span class="v g" style="letter-spacing:-0.57px;margin-right:0.57px">PASS</span></td><td><a><svg class="i" style="left:16.00px;top:13.00px;width:16.00px;height:16.00px;color:#dc3545;" viewBox="0 0 512 512" preserveAspectRatio="none"><path d="M448 192V77.250c0-8.490-3.370-16.620-9.370-22.630L393.370 9.370c-6-6-14.140-9.370-22.630-9.370H96C78.330 0 64 14.330 64 32v160c-35.350 0-64 28.650-64 64v112c0 8.840 7.160 16 16 16h48v96c0 17.670 14.330 32 32 32h320c17.670 0 32-14.330 32-32v-96h48c8.840 0 16-7.160 16-16V256c0-35.350-28.650-64-64-64zm-64 256H128v-96h256v96zm0-224H128V64h192v48c0 8.840 7.160 16 16 16h48v96zm48 72c-13.250 0-24-10.750-24-24 0-13.260 10.750-24 24-24s24 10.740 24 24c0 13.250-10.750 24-24 24z"/></svg><span class="t" style="left:35.70px;top:14px;font-size:15.5px;letter-spacing:0.275px;color:#dc3545;">Print</span></a></td></tr>
</tbody></table>
<div id="pgn"><a class="t" style="left:320.20px;top:969px;font-size:15.5px;letter-spacing:0.029px;color:#666;">Previous</a><a id="p1"><span class="t" style="left:15.90px;top:14px;font-size:15.5px;letter-spacing:0.000px;color:#333;">1</span></a><a class="t" style="left:460.70px;top:969px;font-size:15.5px;letter-spacing:0.433px;color:#666;">Next</a></div>
<div id="sb"><svg class="i" style="left:5.700px;top:3px;width:4.500px;height:7.500px" viewBox="0 0 5 8"><path d="M5 0v8L0 4z" fill="#333"/></svg><div id="sbt"><svg class="i" style="left:243px;top:3px;width:8px;height:8px" viewBox="0 0 8 8"><path d="M1 0h1v8h-1zM3.500 0h1v8h-1zM6 0h1v8h-1z" fill="#555"/></svg></div><svg class="i" style="left:946.500px;top:3px;width:4.500px;height:7.500px" viewBox="0 0 5 8"><path d="M0 0v8l5-4z" fill="#333"/></svg></div>
</main>
</body></html>
